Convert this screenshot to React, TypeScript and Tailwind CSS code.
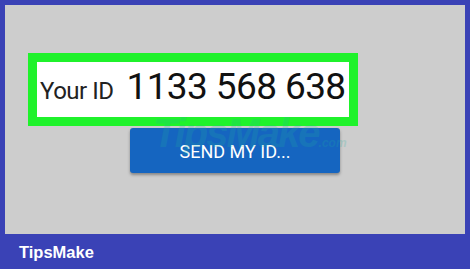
export default function App() {
  return (
    <div className="w-[470px] h-[269px] bg-[#3a42b6] flex flex-col overflow-hidden">
      <div className="relative mx-[5px] mt-[5px] h-[229px] bg-[#cdcdcd] pl-[23px] pt-[48px]">
        <div className="w-[330px] h-[73px] border-[9px] border-[#1ff22b] bg-white flex items-baseline whitespace-nowrap pl-[3px] pt-[2px] font-['Roboto',sans-serif]">
          <span className="text-[24px] text-[#222] tracking-[-0.5px]">Your ID</span>
          <span className="ml-[13px] text-[37px] text-[#111] leading-[46px] tracking-[-0.6px]">1133 568 638</span>
        </div>
        <button className="ml-[102px] mt-[2px] w-[210px] h-[45px] rounded-[3px] bg-[#1565c0] text-white text-[18px] font-['Roboto',sans-serif] shadow-[0_2px_3px_rgba(0,0,0,0.35)] flex items-center justify-center pt-[2px]">
          SEND MY ID...
        </button>
        <div className="absolute left-[148px] top-[108px] text-[40px] leading-none italic font-bold font-['Liberation_Sans',sans-serif] text-[#1fb0a0] opacity-20 tracking-[-2px] pointer-events-none whitespace-nowrap">
          TipsMake<span className="text-[12px] tracking-normal">.com</span>
        </div>
      </div>
      <div className="h-[35px] flex items-center pl-[19px] pt-[1px]">
        <span className="text-white font-bold text-[16.5px] font-['Liberation_Sans',sans-serif]">TipsMake</span>
      </div>
    </div>
  );
}
